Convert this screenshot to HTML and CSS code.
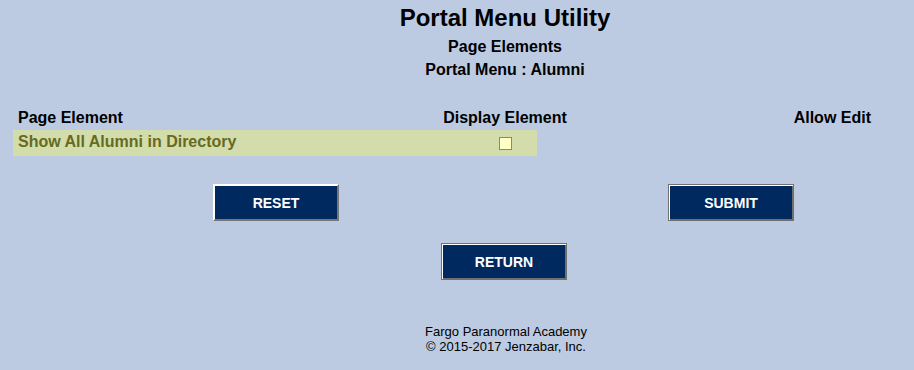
FILE: index.html
```html
<!DOCTYPE html>
<html>
<head>
<meta charset="utf-8">
<title>Portal Menu Utility</title>
<link rel="stylesheet" href="styles.css">
</head>
<body>
<div class="page">
  <header class="heading">
    <h1 class="title">Portal Menu Utility</h1>
    <div class="subtitle first">Page Elements</div>
    <div class="subtitle">Portal Menu : Alumni</div>
  </header>

  <section class="elements">
    <div class="head-row">
      <div class="col-name">Page Element</div>
      <div class="col-display">Display Element</div>
      <div class="col-edit">Allow Edit</div>
    </div>
    <div class="data-row">
      <div class="row-name">Show All Alumni in Directory</div>
      <div class="row-display"><span class="checkbox"></span></div>
    </div>
  </section>

  <div class="button-row">
    <button class="btn btn-plain">RESET</button>
    <button class="btn btn-default">SUBMIT</button>
  </div>
  <div class="return-row">
    <button class="btn btn-default">RETURN</button>
  </div>

  <footer class="footer">
    <div>Fargo Paranormal Academy</div>
    <div>&copy; 2015-2017 Jenzabar, Inc.</div>
  </footer>
</div>
</body>
</html>
```
FILE: styles.css
```css
html, body {
  margin: 0;
  padding: 0;
  background: #bccbe1;
}
body {
  font-family: "Liberation Sans", Arial, sans-serif;
  color: #000;
  width: 914px;
  height: 370px;
  overflow: hidden;
}
.page {
  padding-top: 4px;
}
.heading {
  padding-left: 96px;
  text-align: center;
}
.title {
  margin: 0;
  font-size: 24px;
  line-height: 28px;
  font-weight: bold;
}
.subtitle {
  font-size: 16px;
  font-weight: bold;
  line-height: 23px;
}
.subtitle.first {
  margin-top: 3px;
}
.elements {
  margin-top: 27px;
  margin-left: 13px;
  width: 858px;
}
.head-row {
  display: grid;
  grid-template-columns: 430px 124px 1fr;
  font-size: 16px;
  font-weight: bold;
  line-height: 20px;
}
.col-name {
  padding-left: 5px;
}
.col-display {
  text-align: center;
  white-space: nowrap;
}
.col-edit {
  text-align: right;
}
.data-row {
  margin-top: 2px;
  width: 524px;
  height: 26px;
  display: flex;
  align-items: center;
  background: #d3ddab;
}
.row-name {
  flex: 0 0 430px;
  box-sizing: border-box;
  padding-left: 5px;
  padding-bottom: 2px;
  font-size: 16px;
  font-weight: bold;
  color: #666a22;
  line-height: 24px;
}
.row-display {
  flex: 1;
  display: flex;
  padding-left: 56px;
}
.checkbox {
  display: block;
  width: 11px;
  height: 11px;
  border: 1px solid #8c8c58;
  background: #ffffc6;
}
.button-row {
  margin-top: 28px;
  padding-left: 213px;
  display: flex;
  gap: 329px;
}
.return-row {
  margin-top: 22px;
  padding-left: 441px;
  display: flex;
}
.btn {
  width: 126px;
  height: 37px;
  margin: 0;
  padding: 0;
  box-sizing: border-box;
  background: #002a5f;
  color: #fff;
  font-family: "Liberation Sans", Arial, sans-serif;
  font-size: 14px;
  font-weight: bold;
  display: flex;
  align-items: center;
  justify-content: center;
}
.btn-plain {
  border-style: solid;
  border-width: 2px;
  border-color: #fff #777 #777 #fff;
}
.btn-default {
  border: 1px solid #707070;
  box-shadow: inset 1px 1px 0 #fff, inset -1px -1px 0 #707070;
}
.footer {
  margin-top: 44px;
  padding-left: 98px;
  text-align: center;
  font-size: 13px;
  line-height: 15px;
}
```
